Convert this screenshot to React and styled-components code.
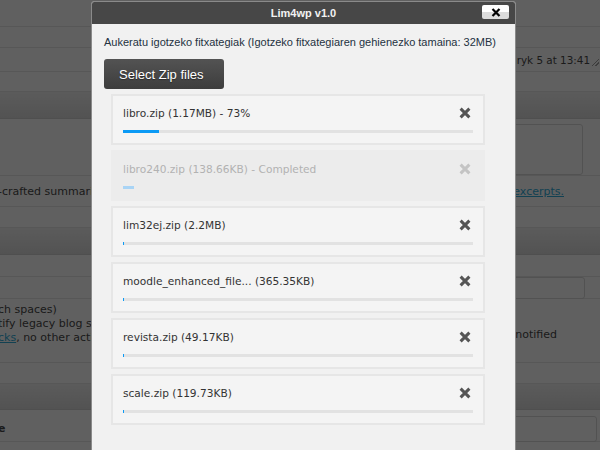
// External Dependencies
import React from 'react';
import styled, { createGlobalStyle } from 'styled-components';

// Global Styles
const GlobalStyle = createGlobalStyle`
  html, body {
    margin: 0;
    padding: 0;
  }
  body {
    width: 600px;
    height: 450px;
    overflow: hidden;
    background: #f1f1f1;
    font-family: "DejaVu Sans", sans-serif;
  }
`

// Styled Components
const Screen = styled.div`
  position: relative;
  width: 600px;
  height: 450px;
  overflow: hidden;
`

const Page = styled.div`
  display: flex;
  flex-direction: column;
  font-size: 11px;
  color: #444;
`

const Row = styled.div`
  height: ${p => p.$h}px;
  box-sizing: border-box;
  border-bottom: ${p => (p.$plain ? 'none' : '1px solid #d9d9d9')};
  background: #f1f1f1;
  display: flex;
  align-items: ${p => p.$top ? 'flex-start' : 'center'};
  justify-content: space-between;
  padding-right: ${p => p.$pr || 0}px;
`

const Band = styled.div`
  height: ${p => p.$h}px;
  background: linear-gradient(#e4e4e4, #cfcfcf);
  border-bottom: 1px solid #c6c6c6;
  box-sizing: border-box;
`

const Frag = styled.span`
  white-space: nowrap;
  margin-left: -2px;
  font-weight: ${p => p.$bold ? 'bold' : 'normal'};
`

const Lines = styled.div`
  display: flex;
  flex-direction: column;
  line-height: 14px;
  padding-top: ${p => p.$pt || 0}px;
`

const Link = styled.span`
  color: #2ea2cc;
  text-decoration: underline;
`

const Status = styled.span`
  position: relative;
  font-size: 10.4px;
  white-space: nowrap;
`

const Grip = styled.span`
  position: absolute;
  right: -9px;
  top: 5px;
  width: 7px;
  height: 7px;
  background: linear-gradient(135deg, transparent 45%, #999 45%, #999 55%, transparent 55%, transparent 70%, #999 70%, #999 80%, transparent 80%);
`

const Field = styled.div`
  width: ${p => p.$w}px;
  height: ${p => p.$hh}px;
  box-sizing: border-box;
  border: 1px solid #cdcdcd;
  border-radius: 3px;
  align-self: ${p => p.$end ? 'flex-end' : 'center'};
`

const Overlay = styled.div`
  position: absolute;
  inset: 0;
  background: rgba(0, 0, 0, 0.6);
`

const Dialog = styled.div`
  position: absolute;
  left: 91px;
  top: 1px;
  width: 425px;
  height: 470px;
  box-sizing: border-box;
  border: 1px solid #8a8a8a;
  border-radius: 3px 3px 0 0;
  background: #f1f1f1;
  display: flex;
  flex-direction: column;
  overflow: hidden;
`

const TitleBar = styled.div`
  position: relative;
  height: 22px;
  background: #474747;
  color: #f2f2f2;
  font-family: "Liberation Sans", Arial, sans-serif;
  font-weight: bold;
  font-size: 11px;
  display: flex;
  align-items: center;
  justify-content: center;
`

const CloseButton = styled.div`
  position: absolute;
  right: 6px;
  top: 3px;
  width: 27px;
  height: 14px;
  box-sizing: border-box;
  border-radius: 2px;
  background: linear-gradient(#ffffff 50%, #dcdcdc 50%);
  display: flex;
  align-items: center;
  justify-content: center;
`

const Body = styled.div`
  padding: 11px 12px 0 12px;
  display: flex;
  flex-direction: column;
  align-items: flex-start;
`

const Hint = styled.div`
  font-family: "Liberation Sans", Arial, sans-serif;
  font-size: 11px;
  line-height: 14px;
  color: #243241;
`

const SelectButton = styled.div`
  margin-top: 10px;
  width: 120px;
  height: 30px;
  box-sizing: border-box;
  padding-left: 15px;
  border-radius: 3px;
  background: linear-gradient(#535353, #3d3d3d);
  color: #fff;
  font-family: "Liberation Sans", Arial, sans-serif;
  font-size: 13px;
  display: flex;
  align-items: center;
  text-shadow: 0 1px 1px rgba(0, 0, 0, 0.4);
`

const List = styled.ul`
  list-style: none;
  margin: 5px 0 0 7px;
  padding: 0;
  display: flex;
  flex-direction: column;
  gap: 5px;
`

const Item = styled.li`
  width: 374px;
  box-sizing: border-box;
  border: 2px solid ${p => p.$done ? '#ececec' : '#e6e6e6'};
  background: ${p => p.$done ? '#ececec' : '#f4f4f4'};
  padding: 10px;
  display: flex;
  flex-direction: column;
`

const ItemHead = styled.div`
  display: flex;
  align-items: center;
  justify-content: space-between;
  height: 14px;
`

const FileName = styled.span`
  font-family: "DejaVu Sans", sans-serif;
  font-size: 10.6px;
  color: ${p => p.$done ? '#b2b2b2' : '#333'};
  white-space: nowrap;
`

const Remove = styled.svg`
  width: 12px;
  height: 12px;
  margin-right: 2px;
`

const Track = styled.div`
  margin-top: 10px;
  height: 3px;
  background: ${p => p.$done ? 'transparent' : '#e2e2e2'};
`

const Fill = styled.div`
  height: 100%;
  background: ${p => p.$done ? '#a9d4f5' : '#0b9af5'};
`

const files = [
  { name: 'libro.zip (1.17MB) - 73%', fill: 36 },
  { name: 'libro240.zip (138.66KB) - Completed', fill: 11, done: true },
  { name: 'lim32ej.zip (2.2MB)', fill: 1 },
  { name: 'moodle_enhanced_file... (365.35KB)', fill: 1 },
  { name: 'revista.zip (49.17KB)', fill: 1 },
  { name: 'scale.zip (119.73KB)', fill: 1 },
]

// Component Definition
const App = () => {
  return (
    <Screen>
      <GlobalStyle />
      <Page>
        <Row $h={27} />
        <Row $h={21} />
        <Row $h={24} $pr={10}>
          <span />
          <Status>Urtarrilaryk 5 at 13:41<Grip /></Status>
        </Row>
        <Row $h={20} />
        <Band $h={27} />
        <Row $h={57} $pr={17}>
          <span />
          <Field $w={380} $hh={51} $end />
        </Row>
        <Row $h={31} $pr={36}>
          <Frag>-crafted summaries of your content</Frag>
          <Link>Learn more about manual excerpts.</Link>
        </Row>
        <Row $h={21} />
        <Band $h={27} />
        <Row $h={22} />
        <Row $h={22} $pr={15}>
          <span />
          <Field $w={380} $hh={22} />
        </Row>
        <Row $h={64} $pr={43} $top>
          <Lines $pt={4}>
            <Frag>ch spaces)</Frag>
            <Frag>tify legacy blog sites</Frag>
            <Frag><Link>cks</Link>, no other action</Frag>
          </Lines>
          <Lines $pt={29}>
            <span>notified</span>
          </Lines>
        </Row>
        <Row $h={21} />
        <Band $h={26} />
        <Row $h={6} $plain />
        <Row $h={26} $pr={3}>
          <Frag $bold>e</Frag>
          <Field $w={380} $hh={26} />
        </Row>
        <Row $h={8} $plain />
      </Page>

      <Overlay />

      <Dialog>
        <TitleBar>
          Lim4wp v1.0
          <CloseButton>
            <svg width="10" height="9" viewBox="0 0 10 9">
              <path d="M1.5 1 L8.5 8 M8.5 1 L1.5 8" stroke="#000" strokeWidth="2.2" />
            </svg>
          </CloseButton>
        </TitleBar>
        <Body>
          <Hint>Aukeratu igotzeko fitxategiak (Igotzeko fitxategiaren gehienezko tamaina: 32MB)</Hint>
          <SelectButton>Select Zip files</SelectButton>
          <List>
            {files.map(file => (
              <Item key={file.name} $done={file.done}>
                <ItemHead>
                  <FileName $done={file.done}>{file.name}</FileName>
                  <Remove viewBox="0 0 12 12">
                    <path
                      d="M1.6 1.6 L10.4 10.4 M10.4 1.6 L1.6 10.4"
                      stroke={file.done ? '#c4c4c4' : '#555'}
                      strokeWidth="3"
                    />
                  </Remove>
                </ItemHead>
                <Track $done={file.done}>
                  <Fill $done={file.done} style={{ width: file.fill }} />
                </Track>
              </Item>
            ))}
          </List>
        </Body>
      </Dialog>
    </Screen>
  );
}

export default App;
